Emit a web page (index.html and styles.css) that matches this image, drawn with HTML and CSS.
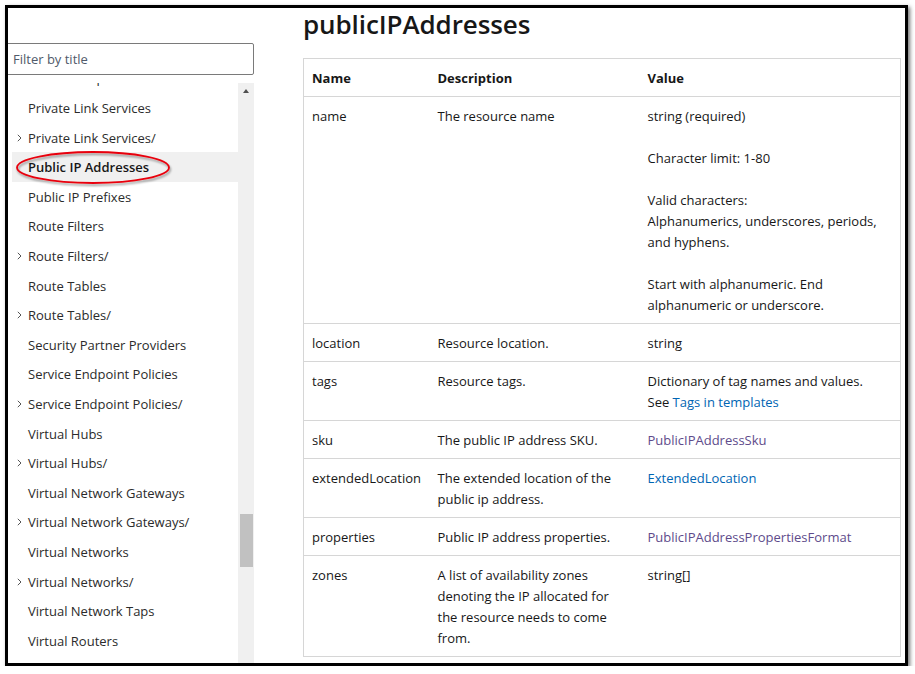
FILE: index.html
```html
<!DOCTYPE html>
<html lang="en">
<head>
<meta charset="utf-8">
<title>publicIPAddresses</title>
<link rel="stylesheet" href="styles.css">
</head>
<body>
<div class="frame">
  <aside class="sidebar">
    <input class="filter" type="text" placeholder="Filter by title">
    <div class="toc">
      <div class="toc-view">
        <ul class="toc-list">
          <li class="item"><span class="chev"><svg width="5" height="8" viewBox="0 0 5 8"><path d="M0.8 0.8 L4 4 L0.8 7.2" fill="none" stroke="#555" stroke-width="1"/></svg></span>Private Endpoints/</li>
          <li class="item"><span class="chev"></span>Private Link Services</li>
          <li class="item"><span class="chev"><svg width="5" height="8" viewBox="0 0 5 8"><path d="M0.8 0.8 L4 4 L0.8 7.2" fill="none" stroke="#555" stroke-width="1"/></svg></span>Private Link Services/</li>
          <li class="item selected"><span class="chev"></span>Public IP Addresses</li>
          <li class="item"><span class="chev"></span>Public IP Prefixes</li>
          <li class="item"><span class="chev"></span>Route Filters</li>
          <li class="item"><span class="chev"><svg width="5" height="8" viewBox="0 0 5 8"><path d="M0.8 0.8 L4 4 L0.8 7.2" fill="none" stroke="#555" stroke-width="1"/></svg></span>Route Filters/</li>
          <li class="item"><span class="chev"></span>Route Tables</li>
          <li class="item"><span class="chev"><svg width="5" height="8" viewBox="0 0 5 8"><path d="M0.8 0.8 L4 4 L0.8 7.2" fill="none" stroke="#555" stroke-width="1"/></svg></span>Route Tables/</li>
          <li class="item"><span class="chev"></span>Security Partner Providers</li>
          <li class="item"><span class="chev"></span>Service Endpoint Policies</li>
          <li class="item"><span class="chev"><svg width="5" height="8" viewBox="0 0 5 8"><path d="M0.8 0.8 L4 4 L0.8 7.2" fill="none" stroke="#555" stroke-width="1"/></svg></span>Service Endpoint Policies/</li>
          <li class="item"><span class="chev"></span>Virtual Hubs</li>
          <li class="item"><span class="chev"><svg width="5" height="8" viewBox="0 0 5 8"><path d="M0.8 0.8 L4 4 L0.8 7.2" fill="none" stroke="#555" stroke-width="1"/></svg></span>Virtual Hubs/</li>
          <li class="item"><span class="chev"></span>Virtual Network Gateways</li>
          <li class="item"><span class="chev"><svg width="5" height="8" viewBox="0 0 5 8"><path d="M0.8 0.8 L4 4 L0.8 7.2" fill="none" stroke="#555" stroke-width="1"/></svg></span>Virtual Network Gateways/</li>
          <li class="item"><span class="chev"></span>Virtual Networks</li>
          <li class="item"><span class="chev"><svg width="5" height="8" viewBox="0 0 5 8"><path d="M0.8 0.8 L4 4 L0.8 7.2" fill="none" stroke="#555" stroke-width="1"/></svg></span>Virtual Networks/</li>
          <li class="item"><span class="chev"></span>Virtual Network Taps</li>
          <li class="item"><span class="chev"></span>Virtual Routers</li>
        </ul>
      </div>
      <div class="scrollbar">
        <div class="arrow"></div>
        <div class="thumb"></div>
      </div>
    </div>
  </aside>
  <main class="content">
    <h1 class="title">publicIPAddresses</h1>
    <table class="props">
      <colgroup><col class="c1"><col class="c2"><col class="c3"></colgroup>
      <thead>
        <tr><th>Name</th><th>Description</th><th>Value</th></tr>
      </thead>
      <tbody>
        <tr>
          <td>name</td>
          <td>The resource name</td>
          <td>
            <p>string (required)</p>
            <p>Character limit: 1-80</p>
            <p>Valid characters:<br>Alphanumerics, underscores, periods, and hyphens.</p>
            <p>Start with alphanumeric. End alphanumeric or underscore.</p>
          </td>
        </tr>
        <tr><td>location</td><td>Resource location.</td><td>string</td></tr>
        <tr><td>tags</td><td>Resource tags.</td><td>Dictionary of tag names and values.<br>See <a class="link" href="#">Tags in templates</a></td></tr>
        <tr><td>sku</td><td>The public IP address SKU.</td><td><a class="link visited" href="#">PublicIPAddressSku</a></td></tr>
        <tr><td>extendedLocation</td><td>The extended location of the public ip address.</td><td><a class="link" href="#">ExtendedLocation</a></td></tr>
        <tr><td>properties</td><td>Public IP address properties.</td><td><a class="link visited" href="#">PublicIPAddressPropertiesFormat</a></td></tr>
        <tr><td>zones</td><td>A list of availability zones denoting the IP allocated for the resource needs to come from.</td><td>string[]</td></tr>
      </tbody>
    </table>
  </main>
  <svg class="ring" width="160" height="40" viewBox="0 0 160 40">
    <defs>
      <filter id="sh" x="-10%" y="-30%" width="120%" height="160%">
        <feDropShadow dx="1" dy="2" stdDeviation="1.2" flood-color="#000" flood-opacity="0.4"/>
      </filter>
    </defs>
    <ellipse cx="79" cy="17.5" rx="76" ry="15.5" fill="none" stroke="#e8000b" stroke-width="1.8" filter="url(#sh)"/>
  </svg>
</div>
</body>
</html>
```
FILE: styles.css
```css
html, body {
  margin: 0;
  padding: 0;
  background: #ffffff;
}

body {
  font-family: "Open Sans", "Noto Sans", sans-serif;
  font-size: 13px;
  color: #171717;
}

.frame {
  position: relative;
  margin: 5px 0 0 5px;
  width: 897px;
  height: 655px;
  border: 3px solid #000;
  background: #fff;
  box-shadow: 2px 2px 4px rgba(0, 0, 0, 0.55);
  overflow: hidden;
  display: flex;
  align-items: flex-start;
}

.sidebar {
  width: 246px;
  flex: none;
  padding-top: 35px;
  display: flex;
  flex-direction: column;
}

.filter {
  box-sizing: border-box;
  margin: 0 0 0 -10px;
  width: 256px;
  height: 32px;
  border: 1px solid #7a7a7a;
  border-radius: 2px;
  padding: 0 0 0 14px;
  font-family: "Open Sans", "Noto Sans", sans-serif;
  font-size: 13px;
  color: #171717;
  background: #fff;
  outline: none;
}

.filter::placeholder {
  color: #505a6a;
}

.toc {
  margin: 8px 0 0 4px;
  height: 580px;
  display: flex;
}

.toc-view {
  width: 226px;
  flex: none;
  overflow: hidden;
}

.toc-list {
  list-style: none;
  margin: -19.4px 0 0 0;
  padding: 0;
}

.item {
  height: 29.6px;
  display: flex;
  align-items: center;
  white-space: nowrap;
  color: #2b2b2b;
}

.item.selected {
  background: #f0f0f0;
  font-weight: 600;
  color: #171717;
}

.chev {
  width: 11px;
  margin-left: 5px;
  flex: none;
  display: flex;
  align-items: center;
}

.scrollbar {
  width: 16px;
  flex: none;
  background: #f0f0f0;
}

.arrow {
  width: 0;
  height: 0;
  margin: 6px 0 0 5px;
  border-left: 3.5px solid transparent;
  border-right: 3.5px solid transparent;
  border-bottom: 4px solid #505050;
}

.thumb {
  margin: 421px 0 0 2px;
  width: 13px;
  height: 53px;
  background: #c1c1c1;
}

.content {
  margin-left: 49px;
  width: 597px;
  flex: none;
}

.title {
  margin: 0 0 17px 0;
  font-size: 26px;
  line-height: 33px;
  font-weight: 600;
  color: #171717;
  letter-spacing: -0.1px;
}

.props {
  width: 597px;
  border-collapse: collapse;
  border: 1px solid #d6d6d6;
  table-layout: fixed;
}

.c1 { width: 126px; }
.c2 { width: 210px; }
.c3 { width: 261px; }

.props th,
.props td {
  text-align: left;
  vertical-align: top;
  padding: 9px 12px 7px 8px;
  line-height: 21px;
  border-top: 1px solid #d6d6d6;
}

.props th {
  font-weight: 700;
}

.props p {
  margin: 21px 0 0 0;
}

.props p:first-child {
  margin-top: 0;
}

.link {
  color: #0065b3;
  text-decoration: none;
}

.link.visited {
  color: #5e4b8b;
}

.ring {
  position: absolute;
  left: 6px;
  top: 142px;
}
```
